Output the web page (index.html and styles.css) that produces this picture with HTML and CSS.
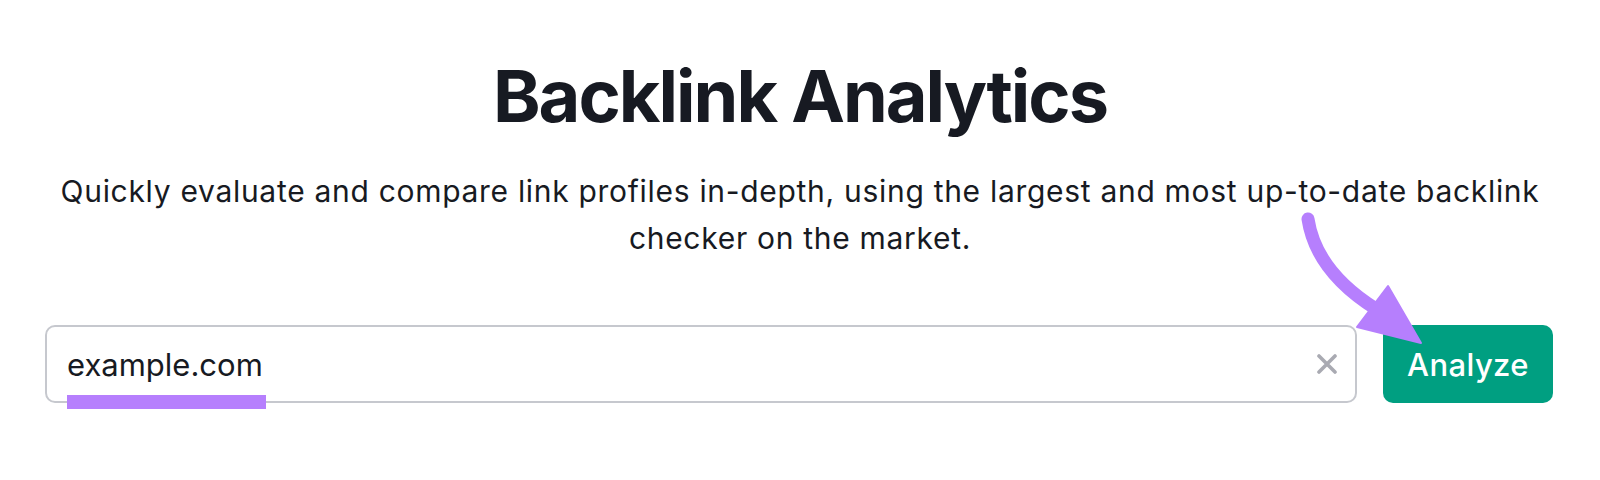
FILE: index.html
```html
<!DOCTYPE html>
<html lang="en">
<head>
    <meta charset="UTF-8">
    <meta name="viewport" content="width=device-width, initial-scale=1.0">
    <title>Backlink Analytics</title>
    <link rel="stylesheet" href="styles.css">
</head>
<body>
    <main class="page">
        <header class="hero">
            <h1 class="hero__title">Backlink Analytics</h1>
            <p class="hero__text">Quickly evaluate and compare link profiles in-depth, using the largest and most up-to-date backlink checker on the market.</p>
        </header>

        <!-- Domain search -->
        <form class="search" onsubmit="event.preventDefault()">
            <div class="search__field">
                <input type="text" name="domain" class="search__input" value="example.com" />
                <button type="button" class="search__clear" aria-label="Clear">
                    <svg width="20" height="20" viewBox="0 0 20 20">
                        <path d="M2 2 L18 18 M18 2 L2 18" stroke="currentColor" stroke-width="3.6" stroke-linecap="round" />
                    </svg>
                </button>
                <span class="mark"></span>
            </div>
            <button type="submit" class="btn">Analyze</button>
        </form>

        <!-- Pointer to the button -->
        <svg class="pointer" width="1600" height="480" viewBox="0 0 1600 480">
            <path d="M1308 219 C1313 252 1333 282 1376 309" fill="none" stroke="#b67ffd" stroke-width="13" stroke-linecap="round" />
            <path d="M1357 327 L1388 286 L1421 343 Z" fill="#b67ffd" stroke="#b67ffd" stroke-width="2" stroke-linejoin="round" />
        </svg>
    </main>
</body>
</html>
```

FILE: styles.css
```css
:root {
	/* COLORS */
	--ink: #171a22;
	--line: #c6c8ce;
	--muted: #a9aab2;
	--green: #009f81;
	--purple: #b67ffd;

	font-family: Inter, "Noto Sans", sans-serif;
	color: var(--ink);
}

body {
	margin: 0;
	background: #fff;
}

.page {
	position: relative;
	height: 480px;
	padding-top: 53px;
	box-sizing: border-box;
}

.hero {
	text-align: center;
}

.hero__title {
	font-size: 72px;
	font-weight: 700;
	letter-spacing: -2px;
	line-height: 86px;
	margin: 0;
}

.hero__text {
	font-size: 30px;
	letter-spacing: 0.7px;
	line-height: 47px;
	margin: 29px auto 0;
	max-width: 1560px;
}

.search {
	display: flex;
	gap: 26px;
	margin: 63px 47px 0 45px;
}

.search__field {
	position: relative;
	flex: 1;
	display: flex;
	align-items: center;
	height: 78px;
	border: 2px solid var(--line);
	border-radius: 10px;
	box-sizing: border-box;
	padding: 0 18px 0 20px;
}

.search__input {
	flex: 1;
	border: none;
	outline: none;
	padding: 0;
	font-family: inherit;
	font-size: 31px;
	color: var(--ink);
	background: transparent;
}

.search__clear {
	display: flex;
	border: none;
	background: none;
	padding: 0;
	color: var(--muted);
	cursor: pointer;
}

/* highlighter stroke under the typed domain */
.mark {
	position: absolute;
	left: 20px;
	top: 68px;
	width: 199px;
	height: 14px;
	background: var(--purple);
}

.btn {
	width: 170px;
	height: 78px;
	border: none;
	border-radius: 10px;
	background: var(--green);
	color: #fff;
	font-family: inherit;
	font-size: 31px;
	font-weight: 500;
	letter-spacing: 0.4px;
	cursor: pointer;
}

.pointer {
	position: absolute;
	left: 0;
	top: 0;
	pointer-events: none;
}
```
